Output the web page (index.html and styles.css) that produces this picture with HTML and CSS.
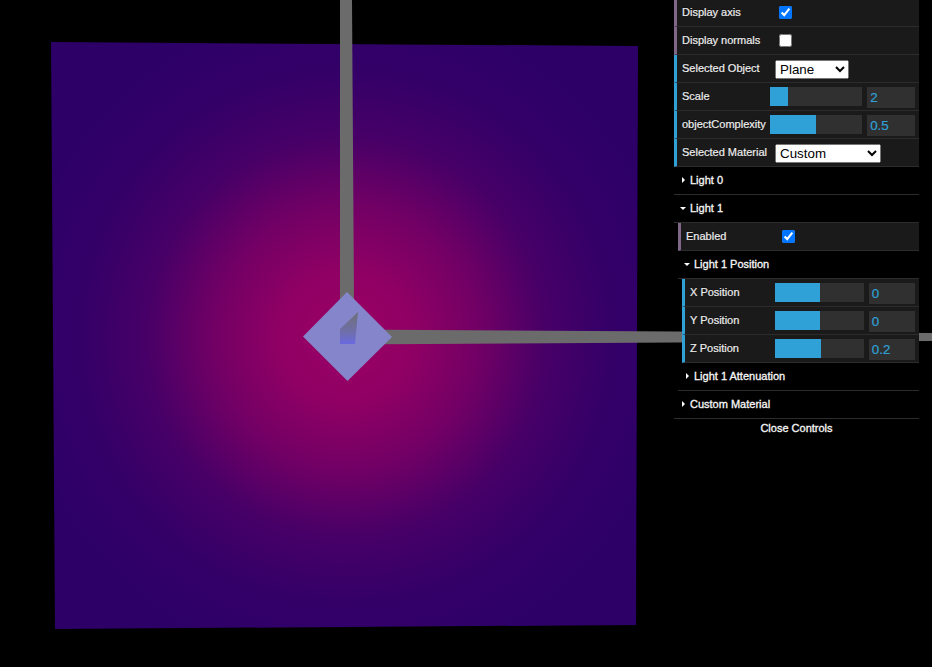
FILE: index.html
```html
<!DOCTYPE html>
<html lang="en">
<head>
	<meta charset="UTF-8">
	<title>Lights</title>
	<link rel="stylesheet" href="styles.css">
</head>
<body>
	<!-- 3D scene -->
	<svg class="scene" width="932" height="667" viewBox="0 0 932 667">
		<defs>
			<radialGradient id="planeLight" gradientUnits="userSpaceOnUse" cx="346" cy="337" r="330">
				<stop offset="0" stop-color="#9a0064"/>
				<stop offset="0.2" stop-color="#900064"/>
				<stop offset="0.4" stop-color="#720065"/>
				<stop offset="0.6" stop-color="#480067"/>
				<stop offset="0.8" stop-color="#340068"/>
				<stop offset="1" stop-color="#2d0068"/>
			</radialGradient>
			<linearGradient id="innerFace" x1="0" y1="0" x2="0" y2="1">
				<stop offset="0" stop-color="#6f6f78"/>
				<stop offset="0.6" stop-color="#6f6fa8"/>
				<stop offset="1" stop-color="#6a6ae0"/>
			</linearGradient>
		</defs>
		<polygon points="51,42 638,46 636,625 55,629" fill="url(#planeLight)"/>
		<polygon points="340,0 352,0 354,300 340,300" fill="#6b6b6b"/>
		<polygon points="385,329.8 932,333 932,341 385,344.3" fill="#6b6b6b"/>
		<polygon points="347,292 392,337 347.5,381 303,336.5" fill="#8585cc"/>
		<polygon points="340,329 358,312 355,344 340,344" fill="url(#innerFace)"/>
	</svg>

	<!-- controls -->
	<div class="gui">
		<div class="row row-bool">
			<span class="label">Display axis</span>
			<div class="control"><input type="checkbox" checked></div>
		</div>
		<div class="row row-bool">
			<span class="label">Display normals</span>
			<div class="control"><input type="checkbox"></div>
		</div>
		<div class="row row-num">
			<span class="label">Selected Object</span>
			<div class="control">
				<select class="select-object"><option>Plane</option><option>Cube</option><option>Sphere</option></select>
			</div>
		</div>
		<div class="row row-num">
			<span class="label">Scale</span>
			<div class="control">
				<div class="slider"><div class="fill" style="width: 19.6%"></div></div>
				<div class="value">2</div>
			</div>
		</div>
		<div class="row row-num">
			<span class="label">objectComplexity</span>
			<div class="control">
				<div class="slider"><div class="fill" style="width: 50%"></div></div>
				<div class="value">0.5</div>
			</div>
		</div>
		<div class="row row-num">
			<span class="label">Selected Material</span>
			<div class="control">
				<select class="select-material"><option>Custom</option><option>Default</option></select>
			</div>
		</div>

		<div class="title closed">Light 0</div>
		<div class="title open">Light 1</div>
		<div class="folder">
			<div class="row row-bool">
				<span class="label">Enabled</span>
				<div class="control"><input type="checkbox" checked></div>
			</div>
			<div class="title open">Light 1 Position</div>
			<div class="folder">
				<div class="row row-num">
					<span class="label">X Position</span>
					<div class="control">
						<div class="slider"><div class="fill" style="width: 50.5%"></div></div>
						<div class="value">0</div>
					</div>
				</div>
				<div class="row row-num">
					<span class="label">Y Position</span>
					<div class="control">
						<div class="slider"><div class="fill" style="width: 50.5%"></div></div>
						<div class="value">0</div>
					</div>
				</div>
				<div class="row row-num">
					<span class="label">Z Position</span>
					<div class="control">
						<div class="slider"><div class="fill" style="width: 51.7%"></div></div>
						<div class="value">0.2</div>
					</div>
				</div>
			</div>
			<div class="title closed">Light 1 Attenuation</div>
		</div>
		<div class="title closed">Custom Material</div>
		<div class="close-btn">Close Controls</div>
	</div>
</body>
</html>
```

FILE: styles.css
```css
*{
	margin: 0;
	padding: 0;
	box-sizing: border-box;
}
body{
	background: #000000;
	overflow: hidden;
	font: 11px "Liberation Sans", Arial, sans-serif;
	color: #eeeeee;
}
.scene{
	display: block;
}
/*control panel lies over the canvas*/
.gui{
	width: 245px;
	position: absolute;
	top: -1px;
	left: 674px;
	text-shadow: 0 -1px 0 #111111;
}
.folder{
	margin-left: 4px;
}
.row{
	display: flex;
	height: 28px;
	padding: 0 4px 0 5px;
	background: #1a1a1a;
	border-bottom: 1px solid #2c2c2c;
	border-left: 3px solid #2fa1d6;
}
.row-bool{
	border-left-color: #806787;
}
.label{
	flex: 0 0 37.8%;
	line-height: 27px;
	white-space: nowrap;
	-webkit-text-stroke: 0.2px #eeeeee;
}
.control{
	flex: 1;
	display: flex;
	align-items: flex-start;
	gap: 5px;
	padding-top: 4px;
}
.control input[type=checkbox]{
	margin: 3px 0 0 9px;
}
.control select{
	height: 19px;
	margin: 1px 0 0 5px;
	font: 13.33px "Liberation Sans", Arial, sans-serif;
}
.select-object{
	width: 74px;
}
.select-material{
	width: 106px;
}
.slider{
	flex: 1;
	height: 19px;
	background: #303030;
}
.fill{
	height: 100%;
	background: #2fa1d6;
}
.value{
	flex: 0 0 33%;
	height: 21px;
	padding: 0 3px;
	line-height: 22px;
	background: #303030;
	color: #2fa1d6;
	font-size: 13.33px;
	text-shadow: none;
	-webkit-text-stroke: 0.2px #2fa1d6;
}
.title{
	height: 28px;
	line-height: 27px;
	padding-left: 16px;
	background: #000000;
	border-bottom: 1px solid #2c2c2c;
	-webkit-text-stroke: 0.3px #ffffff;
	position: relative;
}
/*small arrow in front of a folder title*/
.title::before{
	content: "";
	position: absolute;
	top: 10px;
	left: 8px;
	border: 3px solid transparent;
	border-left: 3px solid #ffffff;
	border-right: 0;
}
.title.open::before{
	top: 12px;
	left: 6px;
	border: 3px solid transparent;
	border-top: 3px solid #ffffff;
	border-bottom: 0;
}
.close-btn{
	height: 20px;
	line-height: 19px;
	text-align: center;
	background: #000000;
	-webkit-text-stroke: 0.3px #ffffff;
}
```
